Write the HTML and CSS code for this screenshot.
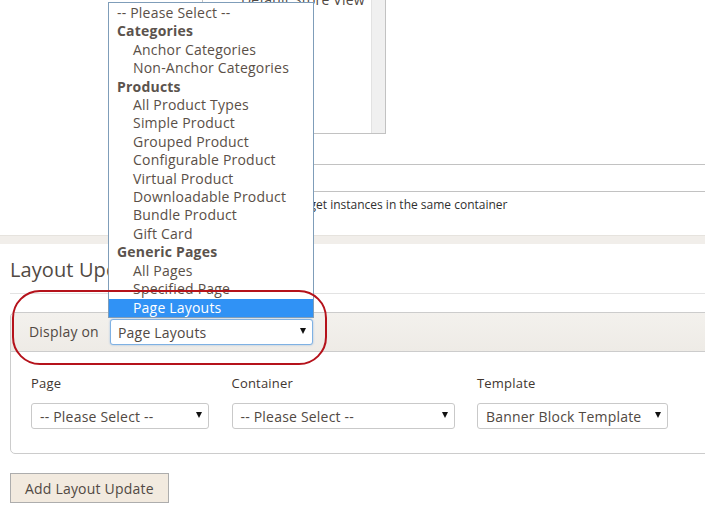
FILE: index.html
```html
<!DOCTYPE html>
<html lang="en">
<head>
<meta charset="utf-8">
<title>Widget Layout Updates</title>
<link rel="stylesheet" href="styles.css">
</head>
<body>
<div class="page">
  <section class="top">
    <div class="store-list">
      <div class="store-options">
        <div class="store-opt">Default Store View</div>
      </div>
      <div class="scrollbar"></div>
    </div>
    <div class="sort-input"></div>
    <p class="note">Sort Order of widget instances in the same container</p>
  </section>
  <div class="band"></div>
  <section class="layout">
    <h2 class="legend">Layout Updates</h2>
    <div class="fieldset">
      <div class="fs-head">
        <span class="head-label">Display on</span>
        <div class="select select-focus"><span>Page Layouts</span><i class="arrow"></i></div>
      </div>
      <div class="fs-body">
        <div class="field">
          <label class="field-label">Page</label>
          <div class="select"><span>-- Please Select --</span><i class="arrow"></i></div>
        </div>
        <div class="field">
          <label class="field-label">Container</label>
          <div class="select"><span>-- Please Select --</span><i class="arrow"></i></div>
        </div>
        <div class="field">
          <label class="field-label">Template</label>
          <div class="select"><span>Banner Block Template</span><i class="arrow"></i></div>
        </div>
      </div>
    </div>
    <button class="btn" type="button">Add Layout Update</button>
  </section>

  <div class="dropdown">
    <div class="opt">-- Please Select --</div>
    <div class="grp">Categories</div>
    <div class="opt sub">Anchor Categories</div>
    <div class="opt sub">Non-Anchor Categories</div>
    <div class="grp">Products</div>
    <div class="opt sub">All Product Types</div>
    <div class="opt sub">Simple Product</div>
    <div class="opt sub">Grouped Product</div>
    <div class="opt sub">Configurable Product</div>
    <div class="opt sub">Virtual Product</div>
    <div class="opt sub">Downloadable Product</div>
    <div class="opt sub">Bundle Product</div>
    <div class="opt sub">Gift Card</div>
    <div class="grp">Generic Pages</div>
    <div class="opt sub">All Pages</div>
    <div class="opt sub">Specified Page</div>
    <div class="opt sub selected">Page Layouts</div>
  </div>

  <div class="annotation"></div>
</div>
</body>
</html>
```

FILE: styles.css
```css
* { box-sizing: border-box; }
html, body { margin: 0; padding: 0; background: #fff; }
body {
  font-family: "Open Sans", "DejaVu Sans", sans-serif;
  font-size: 14px;
  letter-spacing: 0.2px;
  color: #514943;
}
.page {
  position: relative;
  width: 705px;
  height: 516px;
  overflow: hidden;
}

/* top area */
.top {
  display: flex;
  flex-direction: column;
  height: 235px;
}
.store-list {
  display: flex;
  margin-top: -14px;
  margin-left: 202px;
  width: 184px;
  height: 148px;
  border: 1px solid #c2c2c2;
  background: #fff;
}
.store-options { flex: 1; padding-top: 4px; }
.store-opt {
  padding-left: 38px;
  line-height: 18px;
  white-space: nowrap;
}
.scrollbar {
  width: 14px;
  background: #f0f0f0;
  border-left: 1px solid #e2e2e2;
}
.sort-input {
  margin-top: 30px;
  margin-left: 202px;
  width: 600px;
  height: 28px;
  border: 1px solid #c2c2c2;
}
.note {
  margin: 5px 0 0 213px;
  font-size: 12px;
  line-height: 16px;
  letter-spacing: 0;
  color: #303030;
  white-space: nowrap;
}
.band {
  height: 9px;
  background: #f1eeea;
  border-top: 1px solid #e6e3de;
}

/* layout updates */
.layout { padding-left: 10px; }
.legend {
  margin: 14px 0 0;
  padding-bottom: 11px;
  font-size: 20px;
  line-height: 24px;
  font-weight: 400;
  letter-spacing: 0.1px;
  color: #514943;
  border-bottom: 1px solid #e3e3e3;
}
.fieldset {
  margin-top: 18px;
  width: 720px;
  border: 1px solid #cccccc;
  border-radius: 5px;
}
.fs-head {
  display: flex;
  align-items: center;
  padding: 6px 0 6px 18px;
  background: linear-gradient(#f3f1ed, #eeebe6);
  border-bottom: 1px solid #cccccc;
  border-radius: 5px 5px 0 0;
}
.head-label {
  width: 81px;
  line-height: 18px;
}
.select {
  display: flex;
  align-items: center;
  justify-content: space-between;
  height: 26px;
  padding: 0 6px 0 8px;
  border: 1px solid #c9c9c9;
  border-radius: 3px;
  background: #fff;
  white-space: nowrap;
  line-height: 18px;
}
.select span { padding-top: 2px; }
.select-focus {
  width: 203px;
  padding-left: 7px;
  border-color: #7fb1e3;
  box-shadow: 0 0 2px rgba(40, 120, 210, 0.45);
}
.arrow {
  display: block;
  width: 0;
  height: 0;
  margin-top: -3px;
  border-left: 3px solid transparent;
  border-right: 3px solid transparent;
  border-top: 6px solid #111;
}
.fs-body {
  display: grid;
  grid-template-columns: 178px 223px 191px;
  column-gap: 22.5px;
  padding: 22px 20px 24px;
}
.field { display: flex; flex-direction: column; }
.field-label {
  font-size: 13px;
  line-height: 18px;
  color: #41362f;
  margin-bottom: 11px;
}
.btn {
  display: block;
  margin-top: 19px;
  height: 30px;
  padding: 0 14px;
  font-family: inherit;
  font-size: 14px;
  letter-spacing: 0.2px;
  color: #514943;
  background: #f2eadf;
  border: 1px solid #adadad;
  border-radius: 0;
}

/* open dropdown popup */
.dropdown {
  position: absolute;
  left: 108px;
  top: 2px;
  width: 206px;
  height: 316px;
  padding-top: 1px;
  border: 1px solid #7f9db9;
  background: #fff;
  font-size: 14px;
  line-height: 18.4px;
  color: #5a4f47;
}
.dropdown .opt,
.dropdown .grp {
  padding-left: 8px;
  white-space: nowrap;
}
.dropdown .grp { font-weight: 700; color: #5b534d; }
.dropdown .sub { padding-left: 24px; }
.dropdown .selected { background: #3092f5; color: #fff; }

/* red annotation ring */
.annotation {
  position: absolute;
  left: 12px;
  top: 290px;
  width: 315px;
  height: 75px;
  border: 2px solid #b5121b;
  border-radius: 28px;
}
```
